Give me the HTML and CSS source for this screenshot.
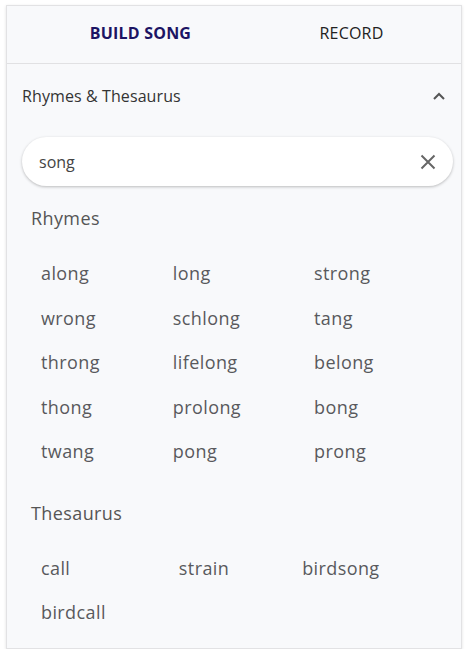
FILE: index.html
```html
<!DOCTYPE html>
<html>
<head>
<meta charset="utf-8">
<link rel="stylesheet" href="styles.css">
</head>
<body>
<div class="panel">
  <div class="tabs">
    <div class="tab active">BUILD SONG</div>
    <div class="tab">RECORD</div>
  </div>
  <div class="acc-head">
    <span class="acc-title">Rhymes &amp; Thesaurus</span>
    <svg class="chev" width="12" height="8" viewBox="0 0 12 8"><path d="M1 7 L6 2 L11 7" fill="none" stroke="#555" stroke-width="2"/></svg>
  </div>
  <div class="search">
    <span class="query">song</span>
    <svg class="clear" width="16" height="16" viewBox="0 0 16 16"><path d="M1.5 1.5 L14.5 14.5 M14.5 1.5 L1.5 14.5" stroke="#666" stroke-width="2"/></svg>
  </div>
  <div class="section-title">Rhymes</div>
  <div class="words">
    <span>along</span><span>long</span><span>strong</span>
    <span>wrong</span><span>schlong</span><span>tang</span>
    <span>throng</span><span>lifelong</span><span>belong</span>
    <span>thong</span><span>prolong</span><span>bong</span>
    <span>twang</span><span>pong</span><span>prong</span>
  </div>
  <div class="section-title second">Thesaurus</div>
  <div class="words">
    <span>call</span><span>strain</span><span>birdsong</span>
    <span>birdcall</span>
  </div>
</div>
</body>
</html>
```
FILE: styles.css
```css
html, body {
  margin: 0;
  padding: 0;
  background: #ffffff;
}
body {
  font-family: "Open Sans", "Noto Sans", sans-serif;
  padding: 5px 0 0 6px;
}
.panel {
  width: 454px;
  height: 642px;
  border: 1px solid #e2e2e4;
  background: #f8f9fb;
  box-shadow: 0 1px 3px rgba(0,0,0,0.12);
  box-sizing: content-box;
}
.tabs {
  display: flex;
  height: 57px;
  border-bottom: 1px solid #e1e1e3;
  padding: 0 4px 0 28px;
}
.tab {
  flex: 1;
  display: flex;
  align-items: center;
  justify-content: center;
  font-size: 16px;
  font-weight: 500;
  color: #222;
  padding-bottom: 4px;
  letter-spacing: 0.2px;
}
.tab.active {
  color: #1c1463;
  font-weight: 700;
}
.acc-head {
  display: flex;
  align-items: center;
  justify-content: space-between;
  height: 64px;
  padding: 0 16px 0 15px;
}
.acc-title {
  font-size: 16px;
  color: #333;
  letter-spacing: 0.1px;
}
.search {
  margin: 9px 8px 0 15px;
  height: 49px;
  border-radius: 25px;
  background: #fff;
  box-shadow: 0 1px 3px rgba(0,0,0,0.25);
  display: flex;
  align-items: center;
  justify-content: space-between;
  padding: 0 17px 0 17px;
}
.query {
  font-size: 16px;
  color: #444;
}
.section-title {
  font-size: 18px;
  color: #555;
  margin: 20px 0 0 24px;
  line-height: 25px;
  letter-spacing: 0.4px;
}
.section-title.second {
  margin-top: 27px;
}
.words {
  display: grid;
  grid-template-columns: repeat(3, auto);
  justify-content: start;
  column-gap: 73px;
  padding: 20px 0 0 34px;
}
.words span {
  font-size: 18px;
  color: #59595d;
  line-height: 44.5px;
  letter-spacing: 0.4px;
}
```
